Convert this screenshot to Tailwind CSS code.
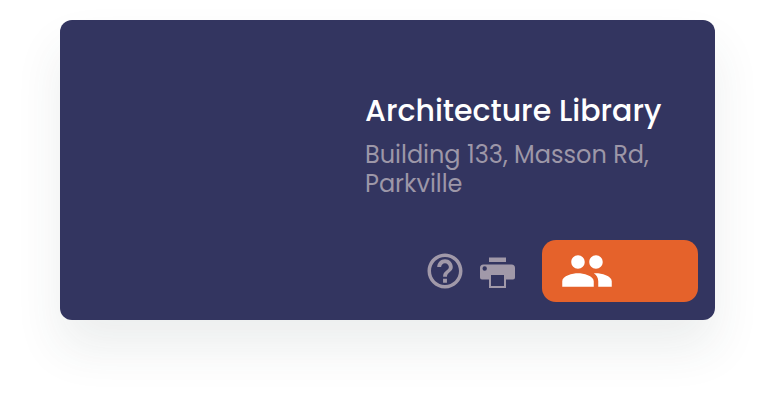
<!DOCTYPE html>
<html lang="en">
<head>
<meta charset="utf-8">
<meta name="viewport" content="width=device-width, initial-scale=1">
<title>Architecture Library</title>
<script src="https://cdn.jsdelivr.net/npm/@tailwindcss/browser@4"></script>
</head>
<body class="bg-white font-[Poppins,Lato,sans-serif]">
<main class="pt-5 pr-[61px] pb-25 pl-15">
  <article class="flex flex-col items-end rounded-xl bg-[#333560] pt-18 pr-[17px] pb-[18px] shadow-[0_28px_48px_rgba(45,62,72,0.09)]">
    <div class="w-full max-w-[333px]">
      <h1 class="text-[30px] leading-[38px] font-medium text-white">Architecture Library</h1>
      <p class="mt-2.5 max-w-[300px] text-[24px] leading-[29px] text-[#9d97a8]">Building 133, Masson Rd, Parkville</p>
    </div>
    <div class="mt-[42px] flex items-center">
      <button type="button" aria-label="Help" class="mr-2.5 text-[#a199a9]"><svg class="size-[42px]" viewBox="0 0 24 24" fill="currentColor"><path d="M12 2C6.480 2 2 6.480 2 12s4.480 10 10 10 10-4.480 10-10S17.520 2 12 2zm0 18c-4.410 0-8-3.590-8-8s3.590-8 8-8 8 3.590 8 8-3.590 8-8 8z"/><path transform="translate(-1.320 -1.320) scale(1.110)" d="M11 18h2v-2h-2v2zM12 6c-2.210 0-4 1.790-4 4h2c0-1.100.9-2 2-2s2 .9 2 2c0 2-3 1.750-3 5h2c0-2.250 3-2.500 3-5 0-2.210-1.790-4-4-4z"/></svg></button>
      <button type="button" aria-label="Print" class="mr-6 text-[#a199a9]"><svg class="size-[42px]" viewBox="0 0 42 42" fill="currentColor"><path d="M13 7.500h17v4.500h-17z"/><path fill-rule="evenodd" d="M7.500 14.500h28a3.500 3.500 0 0 1 3.500 3.500v9.500a2 2 0 0 1-2 2h-7V38h-17v-8.500h-7a2 2 0 0 1-2-2V18A3.500 3.500 0 0 1 7.500 14.500zM8.700 16.300a2.200 2.200 0 1 0 0 4.400a2.200 2.200 0 0 0 0-4.400zM15 25V36h13V25z"/></svg></button>
      <button type="button" aria-label="People" class="flex h-[62px] w-39 items-center rounded-[14px] bg-[#e5622b] pl-[18px] text-white"><svg class="size-[54px]" viewBox="0 0 24 24" fill="currentColor"><path d="M16 11c1.660 0 2.990-1.340 2.990-3S17.660 5 16 5c-1.660 0-3 1.340-3 3s1.340 3 3 3zm-8 0c1.660 0 2.990-1.340 2.990-3S9.660 5 8 5C6.340 5 5 6.340 5 8s1.340 3 3 3zm0 2c-2.330 0-7 1.170-7 3.500V19h14v-2.500c0-2.330-4.670-3.500-7-3.500zm8 0c-.29 0-.62.020-.97.050 1.160.84 1.970 1.970 1.970 3.450V19h6v-2.500c0-2.330-4.670-3.500-7-3.500z"/></svg></button>
    </div>
  </article>
</main>
</body>
</html>
